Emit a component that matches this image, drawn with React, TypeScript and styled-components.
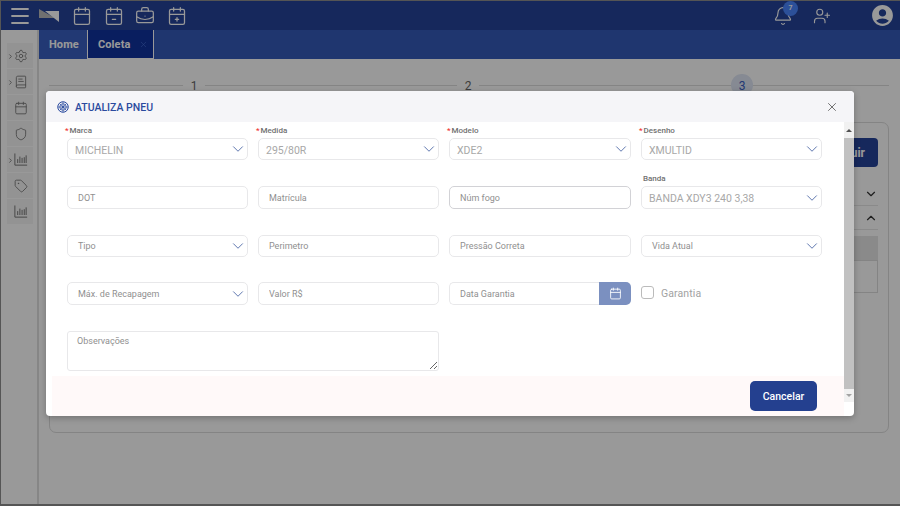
import React from "react";
import styled, { createGlobalStyle } from "styled-components";
import {
  Bell, BookText, BriefcaseBusiness, Calendar, CalendarMinus2, CalendarPlus2,
  ChevronDown, ChevronRight, ChevronUp, Menu, Settings, Shield, Tag, UserPlus, X,
} from "lucide-react";
import { MdAccountCircle } from "react-icons/md";

const Global = createGlobalStyle`
  html, body { margin: 0; padding: 0; height: 100%; overflow: hidden; background: #fff; }
  * { box-sizing: border-box; }
  body { font-family: Roboto, "Liberation Sans", sans-serif; }
`;

const Page = styled.div`
  width: 900px; height: 506px; display: flex; flex-direction: column;
  border: 1px solid #555; border-bottom-width: 2px; border-right: 0;
  position: relative; overflow: hidden;
`;
const TopBar = styled.header`
  height: 29px; flex: none; background: #26449a; display: flex; align-items: center; padding-left: 7px; color: #fff;
`;
const LogoBox = styled.svg`margin-left: 7px; margin-right: 13px; flex: none;`;
const TopIcons = styled.div`display: flex; gap: 11.5px; align-items: center;`;
const TopRight = styled.div`margin-left: auto; display: flex; align-items: center; padding-right: 5px;`;
const BellWrap = styled.div`position: relative; display: flex; margin-right: 20px;`;
const Badge = styled.span`
  position: absolute; left: 10px; top: -5px; width: 15px; height: 15px; border-radius: 50%;
  background: #4a86ff; color: #fff; font-size: 7px; font-weight: 700; display: flex; align-items: center; justify-content: center;
`;
const AvatarGap = styled.div`width: 39px;`;
const Body = styled.div`flex: 1; display: flex; min-height: 0;`;
const Sidebar = styled.aside`
  width: 38px; flex: none; background: #fff; border-right: 2px solid #e0e0e0; padding: 13px 0 0 6px;
  display: flex; flex-direction: column; gap: 1px;
`;
const SideItem = styled.div`
  width: 26px; height: 25px; background: #f6f6f6; color: #777; position: relative; display: flex; align-items: center; justify-content: center; padding-left: 1px;
`;
const SideArrow = styled.span`position: absolute; left: 0; top: 10px; display: flex; color: #777;`;
const Main = styled.main`flex: 1; display: flex; flex-direction: column; min-width: 0; background: #fff;`;
const TabBar = styled.nav`height: 29px; flex: none; background: #355ab9; display: flex;`;
const Tab = styled.div`
  width: 48px; height: 29px; display: flex; align-items: center; padding-left: 10px;
  font-size: 11px; font-weight: 700; color: #fff; letter-spacing: .1px; background: #3a5fc2;
`;
const ActiveTab = styled(Tab)`
  width: 67px; gap: 9px; background: #10339f; border: 1px solid #fff; border-top: 0;
`;
const TabClose = styled.span`display: flex; color: #4a70d8;`;
const Content = styled.div`flex: 1; padding: 15px 11px 0 10px; position: relative;`;
const Stepper = styled.div`
  height: 24px; display: grid; grid-template-columns: repeat(3, 274px); padding-left: 134px; position: relative;
`;
const StepLine = styled.div`position: absolute; left: 0; right: 0; top: 11px; height: 1px; background: #ddd;`;
const Step = styled.div<{ $on?: boolean }>`
  width: 22px; height: 22px; border-radius: 50%; position: relative; display: flex; align-items: center; justify-content: center; padding-top: 2px;
  font-size: 12px; color: ${(p) => (p.$on ? "#3a5fc2" : "#666")}; background: ${(p) => (p.$on ? "#dfe6f5" : "#fff")};
`;
const BackCard = styled.section`
  margin-top: 24px; height: 311px; border: 1px solid #dcdcdc; border-radius: 7px; padding: 15px 10px 0 10px;
  display: flex; flex-direction: column; align-items: stretch;
`;
const BackBtn = styled.div`
  align-self: flex-end; width: 60px; height: 29px; border-radius: 4px; background: #26449a; color: #fff;
  font-size: 12px; font-weight: 700; display: flex; align-items: center; justify-content: center;
`;
const BackRow = styled.div`height: 24px; border-bottom: 1px solid #e6e6e6; display: flex; justify-content: flex-end; align-items: center; color: #333;`;
const BackFirst = styled(BackRow)`margin-top: 15px;`;
const BackHead = styled.div`height: 24px; margin-top: 6px; background: #e6e6e6;`;
const BackCell = styled.div`height: 33px; border: 1px solid #ddd;`;

const Overlay = styled.div`position: absolute; inset: 0; background: rgba(0,0,0,.4);`;
const Modal = styled.div`
  position: absolute; left: 45px; top: 90px; width: 808px; height: 325px; background: #fff; border-radius: 4px; overflow: hidden;
  display: flex; flex-direction: column; box-shadow: 0 2px 6px rgba(0,0,0,.25);
`;
const ModalHead = styled.div`
  height: 31px; flex: none; background: #f5f5f8; display: flex; align-items: center; padding: 1px 15px 0 11px; gap: 6px;
`;
const ModalTitle = styled.h2`margin: 0; font-size: 10.5px; font-weight: 500; color: #2a4a9e;`;
const CloseBtn = styled.span`margin-left: auto; display: flex; color: #555;`;
const ModalBody = styled.div`flex: 1; display: flex; min-height: 0;`;
const Column = styled.div`width: 798px; flex: none; display: flex; flex-direction: column;`;
const Form = styled.form`
  flex: 1; padding: 1px 22px 0 21px; display: grid; grid-template-columns: 181px 181px 182px 181px; column-gap: 10px;
  grid-template-rows: 37px 49px 48px 48px 66px; align-items: end;
`;
const Field = styled.div<{ $wide?: boolean }>`display: flex; flex-direction: column; grid-column: ${(p) => (p.$wide ? "span 2" : "auto")};`;
const Label = styled.label`font-size: 8px; font-weight: 500; color: #707070; height: 15px; line-height: 16px; margin-left: -2px; white-space: nowrap;`;
const PlainLabel = styled(Label)`margin-left: 2px;`;
const Req = styled.span`color: #e33; margin-right: 1px;`;
const SelectBox = styled.div<{ $h?: number }>`
  height: ${(p) => p.$h ?? 22}px; border: 1px solid #e8e8ea; border-radius: 5px; display: flex; align-items: center; padding: 0 0 0 7px; color: #a8a8a8;
  font-size: 10.5px; background: #fff;
`;
const SelectValue = styled.span`padding-top: 2px;`;
const SelectHint = styled.span`font-size: 9px; padding-left: 3px; color: #909090;`;
const Chevron = styled.span`margin-left: auto; display: flex; color: #5b74ad;`;
const TextInput = styled.input<{ $h?: number; $focus?: boolean }>`
  width: 100%; height: ${(p) => p.$h ?? 23}px; border: 1px solid ${(p) => (p.$focus ? "#d2d2d6" : "#e8e8ea")}; border-radius: 5px; padding: 0 10px;
  font: 400 9px Roboto, sans-serif; outline: none;
  &::placeholder { color: #909090; opacity: 1; }
`;
const DateGroup = styled.div`display: flex; height: 23px;`;
const DateInput = styled(TextInput)`border-right: 0; border-radius: 5px 0 0 5px; flex: 1;`;
const DateBtn = styled.button`
  width: 32px; border: 0; flex: none; border-radius: 0 5px 5px 0; background: #7b90c0; color: #fff; display: flex; align-items: center; justify-content: center; padding: 0;
`;
const CheckRow = styled.label`display: flex; align-items: center; gap: 7px; height: 23px; font-size: 10.5px; color: #a2a2a2; letter-spacing: .1px;`;
const CheckBox = styled.input`
  appearance: none; width: 13px; height: 13px; border: 1px solid #bbb; border-radius: 3px; margin: 0 0 2px 0; background: #fff;
`;
const Notes = styled.textarea`
  width: 100%; height: 40px; display: block; border: 1px solid #e8e8ea; border-radius: 3px; padding: 4px 9px;
  font: 400 9px Roboto, sans-serif; outline: none;
  &::placeholder { color: #909090; opacity: 1; }
`;
const Footer = styled.div`
  height: 40px; flex: none; margin-left: 6px; background: #fff9f9; display: flex; align-items: center; justify-content: flex-end; padding-right: 27px;
`;
const CancelBtn = styled.button`
  width: 67px; height: 30px; border: 0; border-radius: 5px; background: #24408f; color: #fff; font: 500 10.5px Roboto, sans-serif; padding: 0;
`;
const Scroll = styled.div`width: 10px; flex: none; height: 280px; display: flex; flex-direction: column; background: #f1f1f1;`;
const ScrollArrow = styled.div<{ $h: number }>`height: ${(p) => p.$h}px; flex: none; display: flex; align-items: center; justify-content: center;`;
const ScrollThumb = styled.div`flex: 1; background: #c1c1c1;`;
const TriUp = styled.span`width: 0; height: 0; border-left: 3px solid transparent; border-right: 3px solid transparent; border-bottom: 3px solid #505050;`;
const TriDown = styled.span`width: 0; height: 0; border-left: 3px solid transparent; border-right: 3px solid transparent; border-top: 3px solid #a3a3a3;`;

const Wheel = () => (
  <svg width="12" height="12" viewBox="0 0 24 24" fill="none" stroke="#2a4a9e" strokeWidth="2">
    <circle cx="12" cy="12" r="10.5" />
    <circle cx="12" cy="12" r="6.5" strokeWidth="1.6" />
    <circle cx="12" cy="12" r="1.8" strokeWidth="1.4" />
    <path d="M12 2v20M2 12h20M5 5l14 14M19 5L5 19" strokeWidth="1.3" />
  </svg>
);

const Bars = () => (
  <svg width="15" height="15" viewBox="0 0 24 24" fill="none" stroke="currentColor" strokeWidth="1.6" strokeLinecap="round">
    <path d="M3 3v18h19M7.5 17v-5M11 17V8M14.5 17v-7M18 17V9M21 17V6" />
  </svg>
);

const Select = ({ value, hint, h }: { value?: string; hint?: string; h?: number }) => (
  <SelectBox $h={h}>
    {value ? <SelectValue>{value}</SelectValue> : <SelectHint>{hint}</SelectHint>}
    <Chevron><ChevronDown size={18} strokeWidth={1.3} /></Chevron>
  </SelectBox>
);

const sideItems: { icon: React.ReactNode; arrow?: boolean }[] = [
  { icon: <Settings size={14} strokeWidth={1.5} />, arrow: true },
  { icon: <BookText size={14} strokeWidth={1.5} />, arrow: true },
  { icon: <Calendar size={14} strokeWidth={1.5} /> },
  { icon: <Shield size={14} strokeWidth={1.5} /> },
  { icon: <Bars />, arrow: true },
  { icon: <Tag size={14} strokeWidth={1.5} /> },
  { icon: <Bars /> },
];

export default function App() {
  return (
    <Page>
      <Global />
      <TopBar>
        <Menu size={24} strokeWidth={1.8} />
        <LogoBox width="20" height="13" viewBox="0 0 20 13">
          <path d="M0 0v9h16z" fill="#bbb" />
          <path d="M6 2h14v11z" fill="#fff" />
        </LogoBox>
        <TopIcons>
          <Calendar size={20} strokeWidth={1.5} />
          <CalendarMinus2 size={20} strokeWidth={1.5} />
          <BriefcaseBusiness size={20} strokeWidth={1.5} />
          <CalendarPlus2 size={20} strokeWidth={1.5} />
        </TopIcons>
        <TopRight>
          <BellWrap>
            <Bell size={20} strokeWidth={1.4} />
            <Badge>7</Badge>
          </BellWrap>
          <UserPlus size={18} strokeWidth={1.5} />
          <AvatarGap />
          <MdAccountCircle size={25} />
        </TopRight>
      </TopBar>
      <Body>
        <Sidebar>
          {sideItems.map((s, i) => (
            <SideItem key={i}>
              {s.arrow && <SideArrow><ChevronRight size={7} strokeWidth={3} /></SideArrow>}
              {s.icon}
            </SideItem>
          ))}
        </Sidebar>
        <Main>
          <TabBar>
            <Tab>Home</Tab>
            <ActiveTab>Coleta<TabClose><X size={9} strokeWidth={1.5} /></TabClose></ActiveTab>
          </TabBar>
          <Content>
            <Stepper>
              <StepLine />
              <Step>1</Step>
              <Step>2</Step>
              <Step $on>3</Step>
            </Stepper>
            <BackCard>
              <BackBtn>Incluir</BackBtn>
              <BackFirst><ChevronDown size={14} /></BackFirst>
              <BackRow><ChevronUp size={14} /></BackRow>
              <BackHead />
              <BackCell />
            </BackCard>
          </Content>
        </Main>
      </Body>
      <Overlay />
      <Modal>
        <ModalHead>
          <Wheel />
          <ModalTitle>ATUALIZA PNEU</ModalTitle>
          <CloseBtn><X size={14} strokeWidth={1.4} /></CloseBtn>
        </ModalHead>
        <ModalBody>
          <Column>
            <Form>
              <Field><Label><Req>*</Req>Marca</Label><Select value="MICHELIN" /></Field>
              <Field><Label><Req>*</Req>Medida</Label><Select value="295/80R" /></Field>
              <Field><Label><Req>*</Req>Modelo</Label><Select value="XDE2" /></Field>
              <Field><Label><Req>*</Req>Desenho</Label><Select value="XMULTID" /></Field>

              <Field><TextInput placeholder="DOT" /></Field>
              <Field><TextInput placeholder="Matrícula" /></Field>
              <Field><TextInput $focus placeholder="Núm fogo" /></Field>
              <Field><PlainLabel>Banda</PlainLabel><Select value="BANDA XDY3 240 3,38" h={23} /></Field>

              <Field><Select hint="Tipo" /></Field>
              <Field><TextInput $h={22} placeholder="Perimetro" /></Field>
              <Field><TextInput $h={22} placeholder="Pressão Correta" /></Field>
              <Field><Select hint="Vida Atual" /></Field>

              <Field><Select hint="Máx. de Recapagem" h={23} /></Field>
              <Field><TextInput placeholder="Valor R$" /></Field>
              <Field>
                <DateGroup>
                  <DateInput placeholder="Data Garantia" />
                  <DateBtn type="button"><Calendar size={13} strokeWidth={1.6} /></DateBtn>
                </DateGroup>
              </Field>
              <Field><CheckRow><CheckBox type="checkbox" />Garantia</CheckRow></Field>

              <Field $wide><Notes placeholder="Observações" /></Field>
            </Form>
            <Footer><CancelBtn type="button">Cancelar</CancelBtn></Footer>
          </Column>
          <Scroll>
            <ScrollArrow $h={16}><TriUp /></ScrollArrow>
            <ScrollThumb />
            <ScrollArrow $h={13}><TriDown /></ScrollArrow>
          </Scroll>
        </ModalBody>
      </Modal>
    </Page>
  );
}
